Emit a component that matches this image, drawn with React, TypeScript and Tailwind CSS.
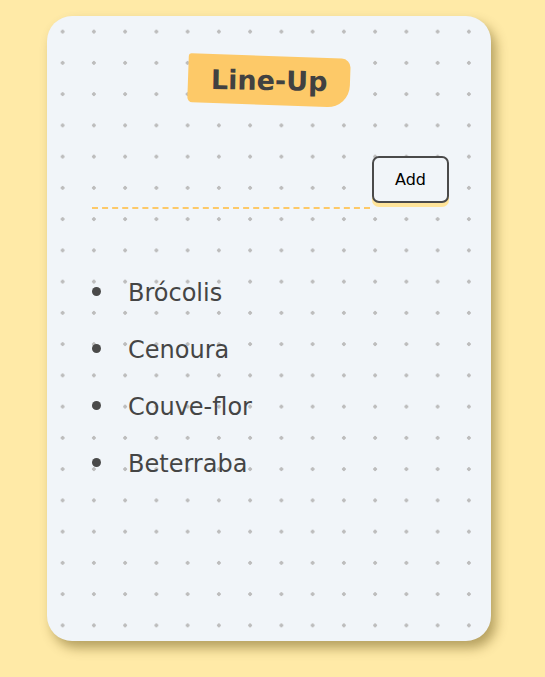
import { useState } from 'react'

const initialItems = ['Brócolis', 'Cenoura', 'Couve-flor', 'Beterraba']

export default function App() {
  const [items, setItems] = useState(initialItems)
  const [text, setText] = useState('')

  const addItem = () => {
    if (!text.trim()) return
    setItems([...items, text.trim()])
    setText('')
  }

  return (
    <div
      className="min-h-screen bg-[#ffeaa7] pt-4 pl-[47px]"
      style={{ fontFamily: '"DejaVu Sans", sans-serif' }}
    >
      {/* Card */}
      <div className="w-[444px] h-[625px] rounded-[25px] bg-[#f1f5f9] bg-[radial-gradient(circle,#bdbdbd_1.6px,transparent_2px)] bg-[length:31.25px_31.25px] shadow-[5px_7px_12px_rgba(90,70,10,0.45)] pt-[40px] pl-[45px] pr-[42px]">
        {/* Title tag */}
        <div className="flex justify-center pr-[3px]">
          <div className="w-[162px] h-[49px] rotate-[2deg] bg-[#fdc968] rounded-[3px_9px_22px_5px] flex items-center justify-center">
            <h1 className="text-[27px] font-bold text-[#414141] -rotate-[1deg] mt-[2px]">Line-Up</h1>
          </div>
        </div>

        {/* Input row */}
        <div className="flex items-end gap-[2px] mt-[51px]">
          <input
            value={text}
            onChange={(e) => setText(e.target.value)}
            className="flex-1 h-[31px] bg-transparent border-b-2 border-dashed border-[#fdc968] outline-none text-[18px] text-[#444]"
          />
          <button
            onClick={addItem}
            className="w-[77px] h-[47px] mb-[6px] border-2 border-[#4a4a4a] rounded-[7px] bg-[#f1f5f9] shadow-[0_4px_0_#ffe49a] text-[16px] text-black"
          >
            Add
          </button>
        </div>

        {/* List */}
        <ul className="mt-[54px]">
          {items.map((item) => (
            <li key={item} className="h-[57px] flex items-center gap-[27px]">
              <span className="w-[9px] h-[9px] rounded-full bg-[#4a4a4a]" />
              <span className="text-[24px] text-[#454545] mt-[2px]">{item}</span>
            </li>
          ))}
        </ul>
      </div>
    </div>
  )
}
